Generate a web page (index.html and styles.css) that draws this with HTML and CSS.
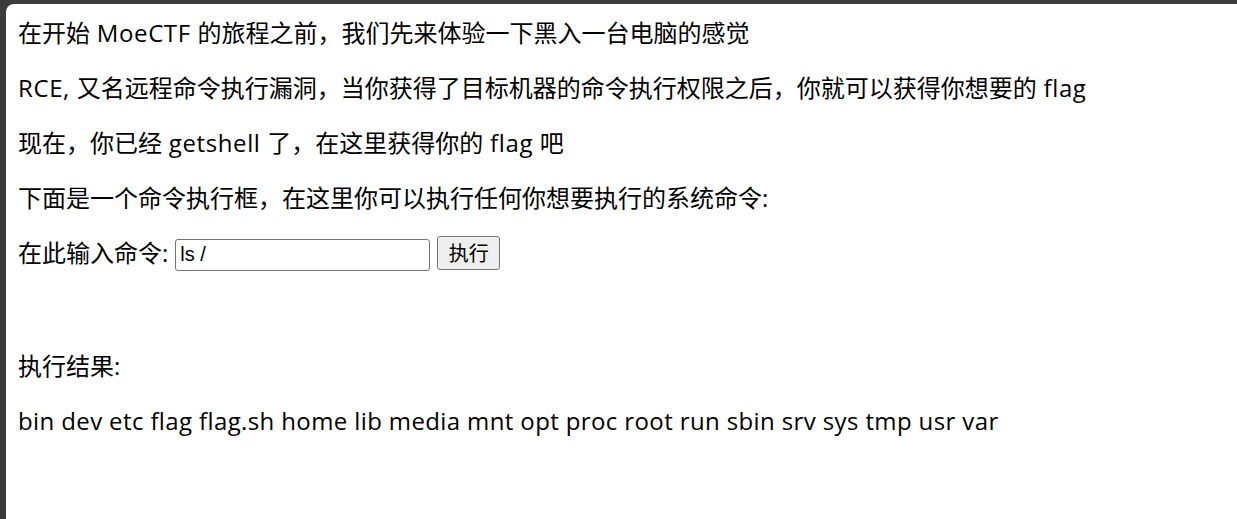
FILE: index.html
```html
<!DOCTYPE html>
<html lang="zh-CN">
<head>
<meta charset="utf-8">
<title>MoeCTF RCE</title>
<link rel="stylesheet" href="styles.css">
</head>
<body>
<div class="page">
  <p class="line">在开始<span class="en"> MoeCTF </span>的旅程之前，我们先来体验一下黑入一台电脑的感觉</p>
  <p class="line"><span class="en">RCE, </span>又名远程命令执行漏洞，当你获得了目标机器的命令执行权限之后，你就可以获得你想要的<span class="en"> flag</span></p>
  <p class="line">现在，你已经<span class="en"> getshell </span>了，在这里获得你的<span class="en"> flag </span>吧</p>
  <p class="line">下面是一个命令执行框，在这里你可以执行任何你想要执行的系统命令:</p>
  <form class="line form-row">
    <label for="cmd">在此输入命令:</label>
    <input id="cmd" class="cmd-input" type="text" value="ls /">
    <button class="run-btn" type="button">执行</button>
  </form>
  <div class="spacer"></div>
  <p class="line">执行结果:</p>
  <p class="line result">bin dev etc flag flag.sh home lib media mnt opt proc root run sbin srv sys tmp usr var</p>
</div>
</body>
</html>
```
FILE: styles.css
```css
html, body {
  margin: 0;
  height: 100%;
  background: #3b3b3b;
  overflow: hidden;
}
.page {
  margin: 4px 0 0 6px;
  height: calc(100% - 4px);
  background: #ffffff;
  border-top-left-radius: 8px;
  box-sizing: border-box;
  padding: 13px 12px 0 12px;
  display: flex;
  flex-direction: column;
  gap: 24px;
  font-family: "Segoe UI", "Open Sans", "Noto Sans CJK SC", sans-serif;
  font-size: 24px;
  color: #000;
}
.line {
  margin: 0;
  line-height: 31px;
  white-space: nowrap;
}
.en {
  letter-spacing: 0.6px;
}
.result {
  letter-spacing: 0.38px;
}
.form-row {
  display: flex;
  align-items: center;
  height: 31px;
}
.form-row label {
  margin-right: 7px;
}
.cmd-input {
  width: 255px;
  height: 32px;
  box-sizing: border-box;
  border: 1px solid #767676;
  border-radius: 3px;
  padding: 0 4px;
  font-family: "Liberation Sans", Arial, sans-serif;
  font-size: 20px;
  color: #000;
  margin: 4px 7px 0 0;
}
.run-btn {
  width: 63px;
  height: 34px;
  box-sizing: border-box;
  border: 1px solid #767676;
  border-radius: 3px;
  background: #efefef;
  font-family: "Noto Sans CJK SC", sans-serif;
  font-size: 20px;
  color: #000;
  padding: 0;
  margin: 0;
}
.spacer {
  height: 34px;
}
```
